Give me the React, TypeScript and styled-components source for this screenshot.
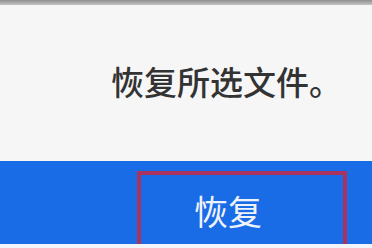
import styled, { createGlobalStyle } from 'styled-components'

const GlobalStyle = createGlobalStyle`
  html, body {
    margin: 0;
    padding: 0;
    background: #f6f6f6;
  }
  body {
    font-family: "Noto Sans CJK SC", "Noto Sans", sans-serif;
  }
`

// styled components
const Dialog = styled.div`
  width: 372px;
  height: 248px;
  display: flex;
  flex-direction: column;
  background: #f6f6f6;
  overflow: hidden;
`

const TopEdge = styled.div`
  height: 5px;
  background: linear-gradient(#8f8f8f, #c4c4c4);
`

const Message = styled.div`
  flex: 1;
  display: flex;
  align-items: center;
  justify-content: flex-end;
  padding: 0 30px 4px 0;
  font-size: 33px;
  font-weight: 500;
  color: #333;
`

const Footer = styled.div`
  height: 83px;
  display: flex;
  justify-content: flex-end;
  padding: 10px 25px 0 0;
  box-sizing: border-box;
  background: #1a6be6;
`

const BottomEdge = styled.div`
  height: 4px;
  background: #f2f4f8;
`

const RestoreButton = styled.div`
  width: 210px;
  box-sizing: border-box;
  border: 4px solid #a8335e;
  border-bottom: none;
  display: flex;
  align-items: center;
  justify-content: center;
  padding: 2px 28px 0 0;
  color: #eef3fb;
  font-size: 34px;
`

export default function App() {
  return (
    <>
      <GlobalStyle />
      <Dialog>
        <TopEdge />
        <Message>恢复所选文件。</Message>
        <Footer>
          <RestoreButton>恢复</RestoreButton>
        </Footer>
        <BottomEdge />
      </Dialog>
    </>
  )
}
